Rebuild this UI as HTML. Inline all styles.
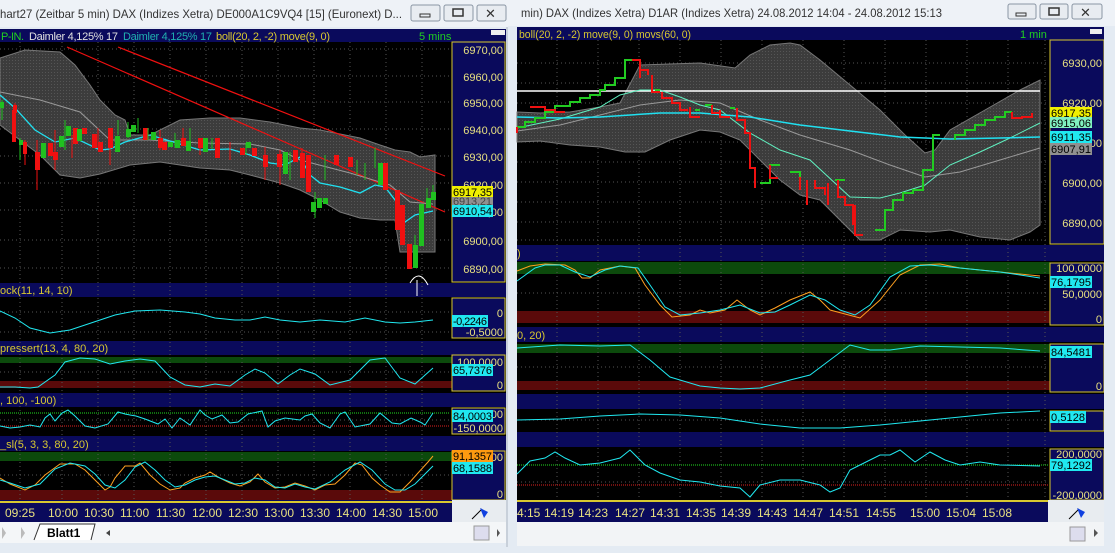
<!DOCTYPE html>
<html><head><meta charset="utf-8"><style>
html,body{margin:0;padding:0;width:1115px;height:553px;overflow:hidden;background:#dfe6ee}
svg{display:block}
text{font-family:"Liberation Sans",sans-serif}
</style></head><body>
<svg width="1115" height="553" viewBox="0 0 1115 553" xmlns="http://www.w3.org/2000/svg">
<defs>
<pattern id="dots" width="3" height="3" patternUnits="userSpaceOnUse"><rect width="3" height="3" fill="#3c3c3c"/><rect width="1" height="1" fill="#555"/></pattern>
</defs>
<!-- ===== RIGHT WINDOW ===== -->
<rect x="508" y="0" width="607" height="553" fill="#e4ebf3"/>
<rect x="508" y="0" width="607" height="26" fill="#eef2f7"/>
<text x="521" y="17" font-size="12" fill="#333" textLength="421" lengthAdjust="spacingAndGlyphs">min)  DAX (Indizes Xetra) D1AR (Indizes Xetra) 24.08.2012 14:04 - 24.08.2012 15:13</text>
<g fill="#e8ecf1" stroke="#8a96a4"><rect x="1008" y="4" width="28" height="15" rx="2"/><rect x="1040" y="4" width="28" height="15" rx="2"/><rect x="1072" y="4" width="30" height="15" rx="2"/></g>
<rect x="1016" y="13" width="10" height="3" fill="none" stroke="#333"/><rect x="1049" y="8" width="10" height="7" fill="none" stroke="#333" stroke-width="1.5"/>
<text x="1080" y="17" font-size="13" fill="#333">✕</text>
<rect x="517" y="27" width="587" height="473" fill="#000"/>
<rect x="517" y="27" width="587" height="13" fill="#0a0a5c"/>
<text x="519" y="38" font-size="11" fill="#d8c830" textLength="172" lengthAdjust="spacingAndGlyphs">boll(20, 2, -2) move(9, 0) movs(60, 0)</text>
<text x="1020" y="38" font-size="11" fill="#20d020">1 min</text>
<rect x="1090" y="29" width="12" height="5" fill="#eee"/>
<g fill="#0a0a5c"><rect x="517" y="245" width="587" height="16"/><rect x="517" y="327" width="587" height="15"/><rect x="517" y="394" width="587" height="15"/><rect x="517" y="432" width="587" height="15"/></g>
<text x="517" y="257" font-size="11" fill="#d8c830">)</text>
<text x="517" y="339" font-size="11" fill="#d8c830">0, 20)</text>
<g fill="#0c4a0c"><rect x="517" y="262" width="533" height="12"/><rect x="517" y="344" width="533" height="9"/></g>
<g fill="#5a0a0a"><rect x="517" y="311" width="533" height="12"/><rect x="517" y="381" width="533" height="9"/></g>
<g stroke="#555" stroke-dasharray="1,3" stroke-width="1">
<path d="M557 40V500M598 40V500M639 40V500M680 40V500M721 40V500M762 40V500M803 40V500M844 40V500M885 40V500M926 40V500M967 40V500M1008 40V500M1045 40V500"/>
<path d="M517 63H1048M517 83H1048M517 103H1048M517 123H1048M517 142H1048M517 162H1048M517 182H1048M517 202H1048M517 222H1048M517 240H1048M517 293H1048M517 367H1048M517 420H1048M517 482H1048"/>
</g>
<polygon fill="url(#dots)" stroke="#777" points="517,112 540,113 570,112 600,107 620,103 640,65 670,64 700,63 735,68 750,55 770,45 790,43 800,45 820,60 850,85 880,110 905,135 925,153 935,150 950,130 985,110 1020,90 1040,80 1040,225 1030,232 1010,240 980,237 950,230 930,232 900,230 880,240 860,240 820,200 800,195 780,180 760,160 740,140 720,132 700,130 670,140 645,152 625,152 600,147 570,145 540,141 517,142"/>
<line x1="517" y1="91" x2="1040" y2="91" stroke="#fff" stroke-width="1.5"/>
<polyline fill="none" stroke="#999" points="517,131 560,125 600,115 640,105 680,100 720,103 760,120 800,135 850,150 890,165 925,177 960,172 1000,160 1040,148"/>
<polyline fill="none" stroke="#60f0c0" points="517,128 560,119 600,107 620,95 640,90 660,90 680,97 700,105 720,110 750,133 780,150 810,160 850,197 880,198 900,193 925,185 950,165 980,152 1010,138 1040,123"/>
<polyline fill="none" stroke="#20e0f0" stroke-width="1.5" points="517,117 560,118 600,117 660,113 700,113 750,117 800,125 850,131 900,137 950,139 1000,138 1040,137"/>
<path fill="none" stroke="#22cc22" stroke-width="2" d="M517 127H525V122H535V118H545V112H555V106H570V102H580V98H590V95H600V90H605V85H615V78H625V60H632M655 90H660M695 110H700M705 105H712M730 108H735M760 183H770V165H780M790 172H800V177M835 180H845M875 230H885V210H893V200H903V193H913V190H923V170H933V135H940M955 140V135H965V130H975V125H985V120H995V117H1005V112H1012"/>
<path fill="none" stroke="#ee1111" stroke-width="2" d="M517 127V133M530 107H545V110H555V112H565M632 60H640V70H648V75M640 62V78M652 75V92H660M662 92V98H672V103H680V110H688M690 107V117H700M712 105V113H720M720 110V117H730M737 108V120H745V133H750V168H755V188M770 165V178H778M800 177V190M807 180V205M815 180V188H825V195M828 183V205M838 180V197H845V205H853V225M855 205V235H863M1012 112V118H1022V117H1032V113"/>
<rect x="1050" y="40" width="54" height="204" fill="#0a0a5c" stroke="#d8c830"/>
<rect x="1050" y="263" width="54" height="62" fill="#0a0a5c" stroke="#d8c830"/>
<rect x="1050" y="344" width="54" height="48" fill="#0a0a5c" stroke="#d8c830"/>
<rect x="1050" y="411" width="54" height="20" fill="#0a0a5c" stroke="#d8c830"/>
<rect x="1050" y="449" width="54" height="51" fill="#0a0a5c" stroke="#d8c830"/>
<g font-size="11" fill="#e8e080" text-anchor="end">
<text x="1102" y="67">6930,00</text><text x="1102" y="107">6920,00</text><text x="1102" y="147">6910,00</text><text x="1102" y="187">6900,00</text><text x="1102" y="227">6890,00</text>
<text x="1102" y="272">100,0000</text><text x="1102" y="298">50,0000</text><text x="1102" y="323">0</text>
<text x="1102" y="390">0</text><text x="1102" y="458">200,0000</text><text x="1102" y="499">-200,0000</text>
</g>
<rect x="1050" y="107" width="42" height="11" fill="#f0f000"/><rect x="1050" y="117" width="42" height="11" fill="#80f0c0"/><rect x="1050" y="131" width="42" height="12" fill="#20e8f0"/><rect x="1050" y="143" width="42" height="12" fill="#909090"/>
<rect x="1050" y="276" width="42" height="12" fill="#20e8f0"/><rect x="1050" y="346" width="42" height="12" fill="#20e8f0"/><rect x="1050" y="411" width="36" height="12" fill="#20e8f0"/><rect x="1050" y="459" width="42" height="12" fill="#20e8f0"/>
<g font-size="11" fill="#000"><text x="1051" y="117" textLength="40">6917,35</text><text x="1051" y="127" textLength="40">6915,06</text><text x="1051" y="141" textLength="40">6911,35</text><text x="1051" y="153" textLength="40">6907,91</text><text x="1051" y="286" textLength="40">76,1795</text><text x="1051" y="356" textLength="40">84,5481</text><text x="1051" y="421" textLength="34">0,5128</text><text x="1051" y="469" textLength="40">79,1292</text></g>
<polyline fill="none" stroke="#ffa020" points="517,271 530,266 545,264 565,265 575,270 582,278 590,278 600,270 620,266 635,268 645,285 660,305 672,317 690,315 700,310 710,313 725,310 737,300 750,310 760,315 775,308 790,300 810,292 820,300 830,310 860,318 880,300 900,275 920,265 940,264 960,268 1000,272 1040,276"/>
<polyline fill="none" stroke="#20e8f0" points="517,281 535,268 545,265 560,265 575,272 590,277 605,270 620,266 638,268 650,285 665,307 680,315 700,313 720,310 740,305 760,313 775,312 790,305 810,295 825,300 840,310 855,315 870,305 890,277 910,266 930,265 960,268 1000,272 1040,278"/>
<polyline fill="none" stroke="#20e8f0" points="517,348 560,345 600,346 630,345 650,360 670,377 700,386 720,388 740,389 760,388 790,380 810,375 830,360 850,345 870,350 890,350 920,346 960,347 1000,348 1040,351"/>
<polyline fill="none" stroke="#20e8f0" points="517,420 560,419 600,416 640,414 680,415 720,418 760,424 800,428 840,428 880,425 920,421 960,417 1000,413 1040,411"/>
<g stroke-dasharray="1,1" fill="none"><line x1="517" y1="465" x2="1048" y2="465" stroke="#20e020"/><line x1="517" y1="485" x2="1048" y2="485" stroke="#e02020"/></g>
<polyline fill="none" stroke="#20e8f0" points="517,474 530,461 545,458 555,452 565,458 580,465 600,463 620,458 630,450 645,465 660,473 680,480 700,482 720,486 740,488 750,497 760,485 780,480 800,480 820,485 830,492 840,488 850,470 860,465 870,460 880,455 890,455 900,450 915,462 930,452 945,460 960,465 980,462 1000,465 1040,466"/>
<rect x="517" y="500" width="531" height="22" fill="#0a0a5c"/>
<line x1="517" y1="501" x2="1048" y2="501" stroke="#d8c830" stroke-width="2"/>
<g font-size="12" fill="#e8e080"><text x="517" y="517">4:15</text><text x="544" y="517">14:19</text><text x="578" y="517">14:23</text><text x="615" y="517">14:27</text><text x="650" y="517">14:31</text><text x="686" y="517">14:35</text><text x="721" y="517">14:39</text><text x="757" y="517">14:43</text><text x="793" y="517">14:47</text><text x="829" y="517">14:51</text><text x="866" y="517">14:55</text><text x="910" y="517">15:00</text><text x="946" y="517">15:04</text><text x="982" y="517">15:08</text></g>
<rect x="1048" y="500" width="56" height="22" fill="#e8ecf0"/>
<path d="M1069 519L1079 509" stroke="#000"/><path d="M1077 508L1085 512L1081 518Z" fill="#1040e0"/>
<rect x="517" y="522" width="587" height="24" fill="#f2f4f6"/>
<rect x="1070" y="527" width="15" height="14" fill="#dde" stroke="#999"/>
<path d="M1094 529L1098 533L1094 537Z" fill="#555"/>
<rect x="1104" y="27" width="11" height="520" fill="#e4ebf3"/>

<!-- ===== LEFT WINDOW ===== -->
<rect x="0" y="0" width="508" height="553" fill="#e4ebf3"/>
<rect x="0" y="0" width="508" height="27" fill="#eef2f7"/>
<text x="0" y="18" font-size="12" fill="#333" textLength="402" lengthAdjust="spacingAndGlyphs">hart27 (Zeitbar 5 min)  DAX (Indizes Xetra) DE000A1C9VQ4 [15] (Euronext) D...</text>
<g fill="#e8ecf1" stroke="#8a96a4"><rect x="411" y="5" width="29" height="16" rx="2"/><rect x="444" y="5" width="29" height="16" rx="2"/><rect x="477" y="5" width="29" height="16" rx="2"/></g>
<rect x="420" y="14" width="10" height="3" fill="none" stroke="#333"/><rect x="453" y="9" width="10" height="7" fill="none" stroke="#333" stroke-width="1.5"/>
<text x="485" y="18" font-size="13" fill="#333">✕</text>
<rect x="0" y="29" width="506" height="471" fill="#000"/>
<rect x="0" y="29" width="506" height="13" fill="#0a0a5c"/>
<text x="1" y="40" font-size="11" fill="#20d020" textLength="23">P-IN.</text>
<text x="29" y="40" font-size="11" fill="#e0e0e0" textLength="89">Daimler  4,125% 17</text>
<text x="123" y="40" font-size="11" fill="#20b0b0" textLength="89">Daimler  4,125% 17</text>
<text x="216" y="40" font-size="11" fill="#d8c830" textLength="114">boll(20, 2, -2) move(9, 0)</text>
<text x="419" y="40" font-size="11" fill="#20d020">5 mins</text>
<rect x="491" y="30" width="14" height="5" fill="#eee"/>
<g fill="#0a0a5c"><rect x="0" y="283" width="506" height="14"/><rect x="0" y="341" width="506" height="14"/><rect x="0" y="393" width="506" height="14"/><rect x="0" y="436" width="506" height="15"/></g>
<g font-size="11" fill="#d8c830"><text x="0" y="294">ock(11, 14, 10)</text><text x="0" y="352">pressert(13, 4, 80, 20)</text><text x="0" y="404">, 100, -100)</text><text x="0" y="448">_sl(5, 3, 3, 80, 20)</text></g>
<g fill="#0c4a0c"><rect x="0" y="357" width="452" height="6"/><rect x="0" y="452" width="452" height="9"/></g>
<g fill="#5a0a0a"><rect x="0" y="381" width="452" height="7"/><rect x="0" y="490" width="452" height="10"/></g>
<g stroke="#555" stroke-dasharray="1,3"><path d="M20 42V500M62 42V500M98 42V500M134 42V500M170 42V500M206 42V500M242 42V500M278 42V500M314 42V500M350 42V500M386 42V500M422 42V500"/>
<path d="M0 49H450M0 76H450M0 102H450M0 129H450M0 156H450M0 183H450M0 210H450M0 240H450M0 268H450M0 312H450M0 332H450M0 372H450M0 420H450M0 475H450"/></g>
<polygon fill="url(#dots)" stroke="#777" points="0,58 25,50 60,52 75,65 90,85 100,100 115,115 125,120 130,135 150,135 180,120 210,118 240,118 270,122 300,128 320,130 340,134 360,138 380,145 395,150 410,152 420,157 435,155 435,252 400,252 395,220 380,220 360,218 340,212 320,200 300,190 280,183 250,175 230,170 200,168 180,165 160,162 130,165 100,174 80,178 60,175 40,155 0,125"/>
<line x1="67" y1="47" x2="445" y2="212" stroke="#f01010" stroke-width="1.2"/>
<line x1="118" y1="47" x2="445" y2="176" stroke="#f01010" stroke-width="1.2"/>
<polyline fill="none" stroke="#999" points="0,92 40,100 80,112 110,140 150,140 200,143 250,144 280,150 300,160 350,173 390,185 410,202 433,204"/>
<polyline fill="none" stroke="#20e0f0" stroke-width="1.3" points="0,95 15,108 35,130 55,142 75,138 100,150 110,149 125,142 150,135 170,141 200,150 230,149 250,155 270,163 285,165 300,157 310,175 320,183 340,187 360,193 375,185 385,187 395,200 405,222 415,215 433,211"/>
<g stroke="#f01010"><path d="M15 103V130M25 140V165M37 140V190M55 130V170M72 135V158M98 128V148M110 128V165M160 130V150M183 128V145M200 140V155M230 142V160M265 147V180M280 150V185M302 148V176"/></g>
<g fill="#f01010"><rect x="13" y="105" width="4" height="8"/><rect x="12" y="110" width="4" height="32"/><rect x="23" y="142" width="4" height="12"/><rect x="35" y="152" width="5" height="18"/><rect x="48" y="143" width="5" height="13"/><rect x="53" y="152" width="5" height="8"/><rect x="73" y="128" width="5" height="16"/><rect x="82" y="128" width="5" height="6"/><rect x="92" y="134" width="5" height="14"/><rect x="98" y="142" width="5" height="10"/><rect x="108" y="128" width="5" height="20"/><rect x="143" y="128" width="5" height="12"/><rect x="158" y="138" width="5" height="10"/><rect x="162" y="142" width="5" height="8"/><rect x="181" y="138" width="5" height="8"/><rect x="198" y="138" width="5" height="10"/><rect x="215" y="138" width="5" height="20"/><rect x="240" y="148" width="5" height="7"/><rect x="252" y="148" width="5" height="8"/><rect x="263" y="155" width="5" height="12"/><rect x="277" y="154" width="5" height="13"/><rect x="293" y="150" width="5" height="12"/><rect x="300" y="153" width="5" height="25"/><rect x="306" y="155" width="5" height="37"/><rect x="334" y="155" width="5" height="10"/><rect x="348" y="157" width="5" height="10"/><rect x="383" y="163" width="5" height="27"/><rect x="395" y="190" width="5" height="40"/><rect x="400" y="205" width="5" height="40"/><rect x="407" y="244" width="5" height="25"/></g>
<g stroke="#20c020"><path d="M2 100V120M20 138V160M65 120V150M118 120V135M128 122V138M138 118V133M148 128V140M175 133V147M190 128V150M212 138V149M246 143V155M290 152V180M315 192V218M325 155V180M357 160V175M365 163V180M375 148V168M415 235V265M427 188V200M433 185V195"/></g>
<g fill="#20c020"><rect x="0" y="102" width="4" height="6"/><rect x="19" y="140" width="4" height="5"/><rect x="41" y="143" width="5" height="15"/><rect x="59" y="136" width="5" height="11"/><rect x="66" y="126" width="5" height="10"/><rect x="77" y="129" width="5" height="12"/><rect x="115" y="136" width="5" height="16"/><rect x="126" y="129" width="5" height="8"/><rect x="131" y="125" width="5" height="7"/><rect x="151" y="132" width="5" height="8"/><rect x="168" y="142" width="5" height="5"/><rect x="175" y="140" width="5" height="8"/><rect x="186" y="141" width="5" height="10"/><rect x="203" y="138" width="5" height="14"/><rect x="246" y="142" width="5" height="6"/><rect x="283" y="152" width="5" height="22"/><rect x="311" y="202" width="5" height="10"/><rect x="317" y="198" width="5" height="10"/><rect x="323" y="198" width="5" height="6"/><rect x="378" y="163" width="5" height="22"/><rect x="413" y="245" width="5" height="23"/><rect x="419" y="204" width="5" height="42"/><rect x="426" y="198" width="5" height="10"/><rect x="431" y="192" width="5" height="8"/></g>
<path d="M410 283Q419 268 428 285" fill="none" stroke="#fff"/><path d="M417 280V296" stroke="#fff"/>
<rect x="452" y="42" width="53" height="240" fill="#0a0a5c" stroke="#d8c830"/>
<rect x="452" y="298" width="53" height="40" fill="#0a0a5c" stroke="#d8c830"/>
<rect x="452" y="355" width="53" height="36" fill="#0a0a5c" stroke="#d8c830"/>
<rect x="452" y="408" width="53" height="26" fill="#0a0a5c" stroke="#d8c830"/>
<rect x="452" y="451" width="53" height="49" fill="#0a0a5c" stroke="#d8c830"/>
<g font-size="11" fill="#e8e080" text-anchor="end">
<text x="503" y="54">6970,00</text><text x="503" y="81">6960,00</text><text x="503" y="107">6950,00</text><text x="503" y="134">6940,00</text><text x="503" y="161">6930,00</text><text x="503" y="189">6920,00</text><text x="503" y="216">6910,00</text><text x="503" y="245">6900,00</text><text x="503" y="273">6890,00</text>
<text x="503" y="317">0</text><text x="503" y="336">-0,5000</text><text x="503" y="366">100,0000</text><text x="503" y="389">0</text><text x="503" y="418">100</text><text x="503" y="432">-150,0000</text><text x="503" y="461">100</text><text x="503" y="498">0</text>
</g>
<rect x="452" y="186" width="41" height="11" fill="#f0f000"/><rect x="452" y="197" width="41" height="9" fill="#909090"/><rect x="452" y="205" width="41" height="12" fill="#20e8f0"/>
<rect x="452" y="315" width="36" height="12" fill="#20e8f0"/><rect x="452" y="364" width="41" height="12" fill="#20e8f0"/><rect x="452" y="410" width="41" height="12" fill="#20e8f0"/><rect x="452" y="450" width="41" height="12" fill="#ff9a10"/><rect x="452" y="462" width="41" height="12" fill="#20e8f0"/>
<g font-size="11" fill="#000"><text x="453" y="196" textLength="39">6917,35</text><text x="453" y="205" fill="#444" textLength="39">6913,21</text><text x="453" y="215" textLength="39">6910,54</text><text x="453" y="325" textLength="34">-0,2246</text><text x="453" y="374" textLength="39">65,7376</text><text x="453" y="420" textLength="39">84,0003</text><text x="453" y="460" textLength="39">91,1357</text><text x="453" y="472" textLength="39">68,1588</text></g>
<polyline fill="none" stroke="#20e8f0" points="0,311 15,318 30,328 50,333 70,330 85,325 100,320 115,315 135,311 160,310 185,312 200,314 215,318 235,320 250,320 265,317 280,320 300,322 320,320 345,322 365,318 385,322 400,323 415,322 433,320"/>
<polyline fill="none" stroke="#20e8f0" points="0,387 15,387 30,388 38,387 55,375 65,362 80,358 95,359 110,364 125,361 140,359 155,361 170,377 185,385 200,387 215,384 230,386 245,375 255,369 265,373 278,384 290,375 300,369 315,374 330,385 350,380 370,360 385,358 400,378 415,384 433,368"/>
<g stroke-dasharray="1,1" fill="none"><line x1="0" y1="413" x2="450" y2="413" stroke="#20e020"/><line x1="0" y1="426" x2="450" y2="426" stroke="#e02020"/></g>
<polyline fill="none" stroke="#20e8f0" points="0,426 10,428 20,427 30,425 40,427 45,418 50,414 55,421 62,413 68,410 75,416 85,426 95,428 108,424 118,412 125,414 130,415 136,416 145,419 158,424 165,419 172,428 180,418 190,425 200,410 205,415 212,419 222,415 230,423 238,422 248,414 262,411 268,427 275,421 285,418 300,420 305,416 312,414 320,423 330,428 340,414 345,412 355,427 370,424 380,413 392,423 400,424 411,418 420,422 425,425 433,413"/>
<polyline fill="none" stroke="#ffa020" points="0,478 10,484 25,490 35,485 45,475 60,464 75,464 85,470 95,480 105,490 110,487 115,478 125,466 135,466 140,463 150,475 160,484 170,490 180,488 185,483 195,478 205,475 210,472 220,478 230,483 240,486 250,482 258,474 265,482 275,488 285,487 295,483 305,486 315,490 325,485 335,484 345,475 355,463 362,465 372,478 380,485 390,492 400,492 410,482 418,473 428,462 433,456"/>
<polyline fill="none" stroke="#20e8f0" points="0,480 10,483 25,488 40,484 55,469 70,463 85,466 95,474 105,485 115,488 125,480 135,467 145,462 155,470 165,480 175,487 185,485 195,480 205,477 215,476 225,480 235,484 245,483 255,478 265,480 275,487 285,488 295,484 305,487 315,489 330,482 345,470 360,462 372,470 385,484 395,490 405,490 415,484 425,474 433,466"/>
<rect x="0" y="500" width="452" height="22" fill="#0a0a5c"/>
<line x1="0" y1="502" x2="452" y2="502" stroke="#d8c830" stroke-width="2"/>
<g font-size="12" fill="#e8e080"><text x="5" y="517">09:25</text><text x="48" y="517">10:00</text><text x="84" y="517">10:30</text><text x="120" y="517">11:00</text><text x="156" y="517">11:30</text><text x="192" y="517">12:00</text><text x="228" y="517">12:30</text><text x="264" y="517">13:00</text><text x="300" y="517">13:30</text><text x="336" y="517">14:00</text><text x="372" y="517">14:30</text><text x="408" y="517">15:00</text></g>
<rect x="452" y="500" width="54" height="22" fill="#e8ecf0"/>
<path d="M472 519L482 509" stroke="#000"/><path d="M480 508L488 512L484 518Z" fill="#1040e0"/>
<rect x="0" y="522" width="506" height="21" fill="#f4f6f8"/>
<path d="M2 527L6 533L2 539ZM21 527L25 533L21 539Z" fill="#bbb"/>
<path d="M34 540L40 524H95L91 540" fill="#fff" stroke="#333"/>
<text x="47" y="537" font-size="12" font-weight="bold" fill="#000">Blatt1</text>
<path d="M110 530L106 533L110 536Z" fill="#444"/>
<rect x="474" y="526" width="15" height="14" fill="#dde" stroke="#999"/>
<path d="M497 529L500 533L497 537Z" fill="#555"/>
<rect x="506" y="27" width="2" height="520" fill="#c8d0da"/>
</svg>
</body></html>
